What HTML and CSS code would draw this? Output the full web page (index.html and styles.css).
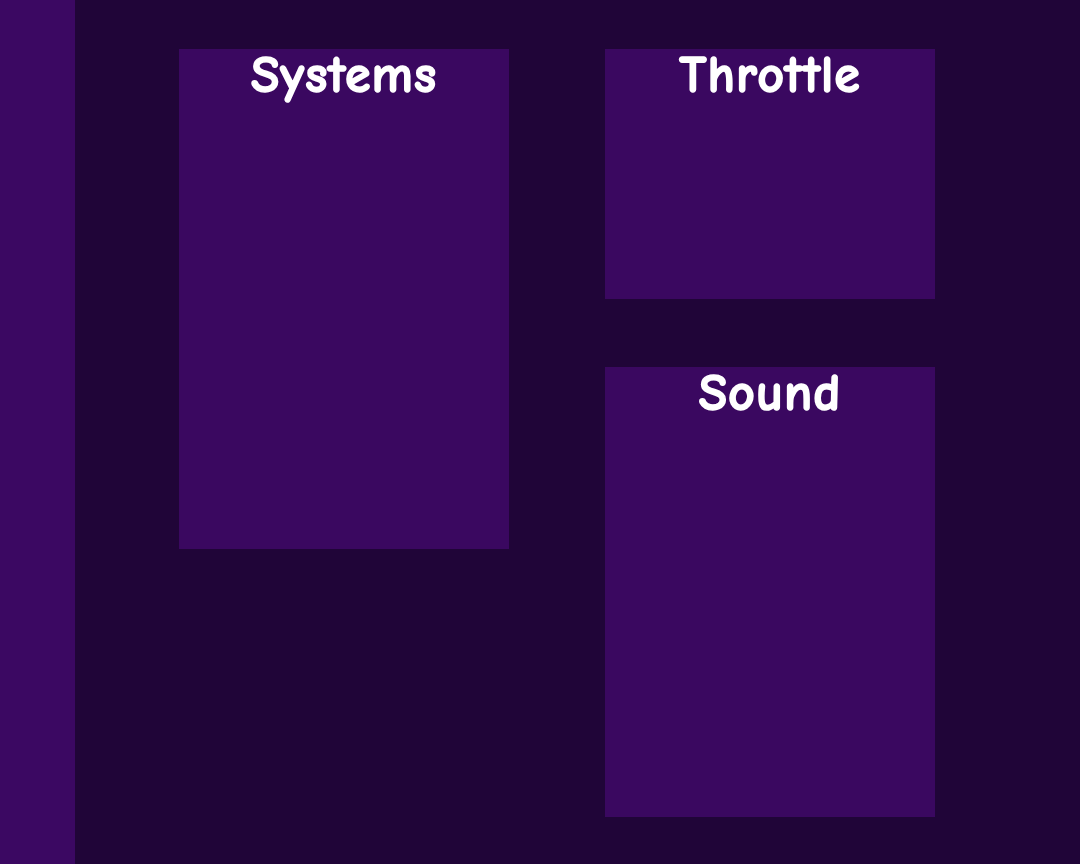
FILE: index.html
```html
<!DOCTYPE html>
<html lang="en">

<head>
    <meta charset="UTF-8">
    <title>Dashboard</title>
    <link rel="stylesheet" href="styles.css">
</head>

<body>
    <div class="sidebar"></div>

    <div class="main">
        <div class="panel systems">
            <h2>Systems</h2>
        </div>

        <div class="column">
            <div class="panel throttle">
                <h2>Throttle</h2>
            </div>
            <div class="panel sound">
                <h2>Sound</h2>
            </div>
        </div>
    </div>
</body>

</html>
```

FILE: styles.css
```css
body {
    margin: 0;
    height: 864px;
    display: flex;
    background-color: #200538;
    font-family: "Comic Sans MS", "Comic Neue", "Liberation Sans", sans-serif;
    overflow: hidden;
}

.sidebar {
    width: 75px;
    flex-shrink: 0;
    background-color: #3b0862;
}

.main {
    display: flex;
    align-items: flex-start;
    gap: 96px;
    padding: 49px 0 0 104px;
}

.column {
    display: flex;
    flex-direction: column;
    gap: 68px;
}

.panel {
    width: 330px;
    background-color: #3a0860;
}

.systems {
    height: 500px;
}

.throttle {
    height: 250px;
}

.sound {
    height: 450px;
}

h2 {
    margin: 0;
    text-align: center;
    color: white;
    font-size: 52px;
    font-weight: bold;
    line-height: 52px;
    letter-spacing: 1px;
    -webkit-text-stroke: 1.5px white;
}
```
